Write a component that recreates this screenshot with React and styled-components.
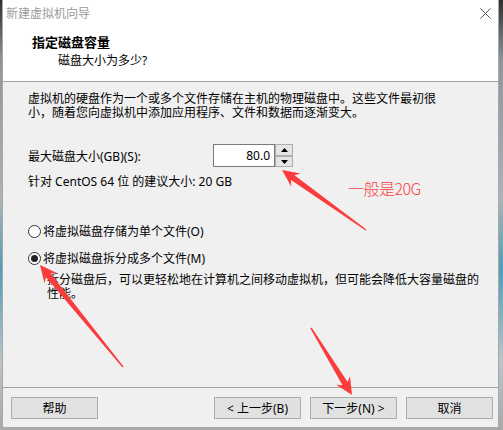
import React from "react";
import styled, { createGlobalStyle } from "styled-components";

const GlobalStyle = createGlobalStyle`
  html, body {
    margin: 0;
    padding: 0;
  }
  body {
    width: 503px;
    height: 430px;
    overflow: hidden;
    background: linear-gradient(
      to bottom,
      #2e2e2e 0,
      #8d969c 60px,
      #a9b3b8 200px,
      #4f9dbb 270px,
      #b9c4ca 360px,
      #a9a9a9 430px
    );
    font-family: "Noto Sans", "Noto Sans CJK SC", sans-serif;
  }
`;

const Page = styled.div`
  position: relative;
  width: 503px;
  height: 430px;
`;

const Window = styled.div`
  margin-left: 2px;
  width: 497px;
  height: 428px;
  box-sizing: border-box;
  border: 1px solid #a8a8a8;
  border-top: none;
  background: #f0f0f0;
  display: flex;
  flex-direction: column;
  color: #000;
  font-size: 12px;
`;

const Top = styled.div`
  height: 82px;
  box-sizing: border-box;
  background: #fff;
  border-bottom: 1px solid #a0a0a0;
`;

const TitleBar = styled.div`
  height: 26px;
  display: flex;
  align-items: center;
  justify-content: space-between;
  padding: 0 7px 0 3px;
  color: #9a9a9a;
  font-size: 12px;
`;

const Header = styled.div`
  padding: 8px 0 0 29px;
  display: flex;
  flex-direction: column;
  gap: 3px;
`;

const Heading = styled.div`
  font-size: 13px;
  font-weight: 700;
  line-height: 16px;
`;

const SubHeading = styled.div`
  margin-left: 26px;
  line-height: 16px;
`;

const Body = styled.div`
  flex: 1;
  padding: 10px 0 0 25px;
  display: flex;
  flex-direction: column;
`;

const Paragraph = styled.p`
  margin: 0;
  line-height: 14px;
  white-space: nowrap;
`;

const SpinRow = styled.div`
  margin-top: 24px;
  height: 23px;
  display: flex;
  align-items: center;
`;

const Label = styled.span`
  width: 185px;
`;

const SpinInput = styled.div`
  width: 62px;
  height: 23px;
  box-sizing: border-box;
  border: 1px solid #7a7a7a;
  background: #fff;
  display: flex;
  align-items: center;
  justify-content: flex-end;
  padding-right: 4px;
`;

const SpinButtons = styled.div`
  width: 18px;
  height: 23px;
  display: flex;
  flex-direction: column;
`;

const SpinButton = styled.div`
  height: ${({ $h }) => $h}px;
  box-sizing: border-box;
  border: 1px solid #adadad;
  background: #e5e5e5;
  display: flex;
  align-items: center;
  justify-content: center;
`;

const Hint = styled.div`
  margin-top: 7px;
  line-height: 16px;
`;

const RadioRow = styled.div`
  margin-top: ${({ $mt }) => $mt}px;
  height: 16px;
  display: flex;
  align-items: center;
  gap: 2px;
`;

const RadioCircle = styled.span`
  width: 13px;
  height: 13px;
  box-sizing: border-box;
  border: 1px solid #333;
  border-radius: 50%;
  background: #fff;
  display: flex;
  align-items: center;
  justify-content: center;

  &::after {
    content: "";
    width: 7px;
    height: 7px;
    border-radius: 50%;
    background: ${({ $checked }) => ($checked ? "#222" : "transparent")};
  }
`;

const Desc = styled.p`
  margin: 7px 0 0 19px;
  line-height: 14px;
  white-space: nowrap;
`;

const Footer = styled.div`
  height: 40px;
  box-sizing: border-box;
  border-top: 1px solid #a0a0a0;
  padding: 9px 5px 0 8px;
  display: flex;
  align-items: flex-start;
`;

const Actions = styled.div`
  margin-left: auto;
  display: flex;
  gap: 9px;
`;

const Button = styled.div`
  width: 87px;
  height: 22px;
  box-sizing: border-box;
  border: 1px solid #adadad;
  background: #e1e1e1;
  display: flex;
  align-items: center;
  justify-content: center;
  white-space: pre;
`;

const Overlay = styled.svg`
  position: absolute;
  left: 0;
  top: 0;
  pointer-events: none;
`;

const Note = styled.div`
  position: absolute;
  left: 348px;
  top: 179px;
  color: #f94040;
  font-size: 16px;
  line-height: 18px;
  font-family: "Noto Sans CJK SC", sans-serif;
  font-weight: 300;
  letter-spacing: -0.5px;
`;

const arrowPoints = (tip, tail, headLen = 17, headW = 8, neckW = 3, tailW = 0.7) => {
  const dx = tail[0] - tip[0];
  const dy = tail[1] - tip[1];
  const len = Math.hypot(dx, dy);
  const ux = dx / len;
  const uy = dy / len;
  const p = (a, b) => [tip[0] + ux * a - uy * b, tip[1] + uy * a + ux * b];
  return [
    p(0, 0),
    p(headLen, headW),
    p(headLen * 0.78, neckW),
    p(len, tailW),
    p(len, -tailW),
    p(headLen * 0.78, -neckW),
    p(headLen, -headW),
  ]
    .map((q) => q.map((v) => v.toFixed(1)).join(","))
    .join(" ");
};

const arrows = [
  { tip: [282, 170], tail: [366, 230] },
  { tip: [40, 265], tail: [123, 367] },
  { tip: [352, 395], tail: [311, 328] },
];

const CloseIcon = () => (
  <svg width="11" height="11" viewBox="0 0 11 11">
    <path d="M0.5 0.5 L10.5 10.5 M10.5 0.5 L0.5 10.5" stroke="#555" strokeWidth="1" />
  </svg>
);

const Tri = ({ up }) => (
  <svg width="7" height="4" viewBox="0 0 7 4">
    <path d={up ? "M3.5 0 L7 4 L0 4 Z" : "M0 0 L7 0 L3.5 4 Z"} fill="#000" />
  </svg>
);

export default function App() {
  return (
    <Page>
      <GlobalStyle />
      <Window>
        <Top>
          <TitleBar>
            <span>新建虚拟机向导</span>
            <CloseIcon />
          </TitleBar>
          <Header>
            <Heading>指定磁盘容量</Heading>
            <SubHeading>磁盘大小为多少?</SubHeading>
          </Header>
        </Top>
        <Body>
          <Paragraph>
            虚拟机的硬盘作为一个或多个文件存储在主机的物理磁盘中。这些文件最初很
            <br />
            小，随着您向虚拟机中添加应用程序、文件和数据而逐渐变大。
          </Paragraph>
          <SpinRow>
            <Label>最大磁盘大小(GB)(S):</Label>
            <SpinInput>80.0</SpinInput>
            <SpinButtons>
              <SpinButton $h={12}>
                <Tri up />
              </SpinButton>
              <SpinButton $h={11}>
                <Tri />
              </SpinButton>
            </SpinButtons>
          </SpinRow>
          <Hint>针对 CentOS 64 位 的建议大小: 20 GB</Hint>
          <RadioRow $mt={33}>
            <RadioCircle />
            <span>将虚拟磁盘存储为单个文件(O)</span>
          </RadioRow>
          <RadioRow $mt={11}>
            <RadioCircle $checked />
            <span>将虚拟磁盘拆分成多个文件(M)</span>
          </RadioRow>
          <Desc>
            拆分磁盘后，可以更轻松地在计算机之间移动虚拟机，但可能会降低大容量磁盘的
            <br />
            性能。
          </Desc>
        </Body>
        <Footer>
          <Button>帮助</Button>
          <Actions>
            <Button>{"< 上一步(B)"}</Button>
            <Button>{"下一步(N) >"}</Button>
            <Button>取消</Button>
          </Actions>
        </Footer>
      </Window>
      <Note>一般是20G</Note>
      <Overlay width="503" height="430" viewBox="0 0 503 430">
        {arrows.map((a, i) => (
          <polygon key={i} points={arrowPoints(a.tip, a.tail)} fill="#fa3c3c" />
        ))}
      </Overlay>
    </Page>
  );
}
